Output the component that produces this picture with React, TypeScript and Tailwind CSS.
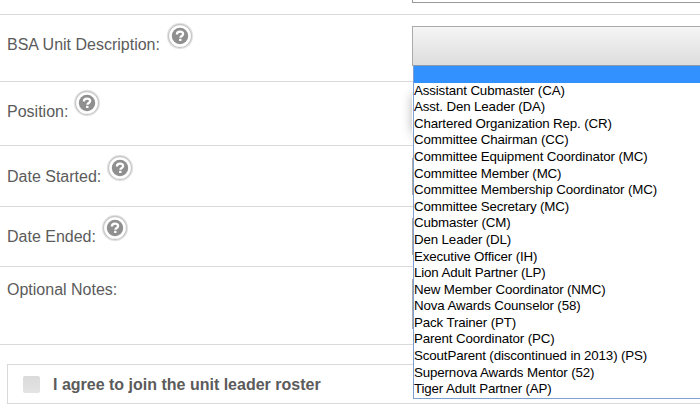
import React from 'react';

const ROWS = [
  { label: 'BSA Unit Description:', help: true, height: 'h-[67px]', pad: 'pt-[18px]', width: 'w-[159px]' },
  { label: 'Position:', help: true, height: 'h-[64px]', pad: 'pt-[18px]', width: 'w-[66px]' },
  { label: 'Date Started:', help: true, height: 'h-[61px]', pad: 'pt-[19px]', width: 'w-[99px]' },
  { label: 'Date Ended:', help: true, height: 'h-[60px]', pad: 'pt-[18px]', width: 'w-[94px]' },
  { label: 'Optional Notes:', help: false, height: 'h-[78px]', pad: 'pt-[11px]', width: 'w-auto' },
];

const POSITIONS = [
  'Assistant Cubmaster (CA)',
  'Asst. Den Leader (DA)',
  'Chartered Organization Rep. (CR)',
  'Committee Chairman (CC)',
  'Committee Equipment Coordinator (MC)',
  'Committee Member (MC)',
  'Committee Membership Coordinator (MC)',
  'Committee Secretary (MC)',
  'Cubmaster (CM)',
  'Den Leader (DL)',
  'Executive Officer (IH)',
  'Lion Adult Partner (LP)',
  'New Member Coordinator (NMC)',
  'Nova Awards Counselor (58)',
  'Pack Trainer (PT)',
  'Parent Coordinator (PC)',
  'ScoutParent (discontinued in 2013) (PS)',
  'Supernova Awards Mentor (52)',
  'Tiger Adult Partner (AP)',
];

function HelpIcon() {
  return (
    <svg className="-mt-[11px] h-7 w-7 shrink-0" viewBox="0 0 28 28" fill="none">
      <circle cx="14" cy="14" r="12.3" stroke="#e6e6e6" strokeWidth="1.8" />
      <circle cx="14" cy="14" r="11.5" fill="#fff" stroke="#c8c8c8" strokeWidth="1.3" />
      <circle cx="14" cy="14" r="8.2" fill="#8f8f8f" />
      <path d="M10.9 12.4c0-1.8 1.3-2.7 3.1-2.7s3.1.9 3.1 2.4c0 1.9-2.7 1.8-2.7 3.7" stroke="#fff" strokeWidth="2.3" />
      <path d="M13.1 16.8h2.4v2.2h-2.4z" fill="#fff" />
    </svg>
  );
}

export default function App() {
  return (
    <div className="relative h-[412px] w-[700px] overflow-hidden bg-white font-['Liberation_Sans',Arial,sans-serif] text-[#5b5b5b]">
      <div className="flex h-[15px] border-b border-[#d9d9d9]">
        <div className="ml-[412px] h-[3px] flex-1 border-b border-l border-[#999]" />
      </div>

      {ROWS.map((row, i) => (
        <div key={row.label} className={`flex border-b border-[#d9d9d9] ${row.height}`}>
          <div className={`flex w-[412px] shrink-0 items-start pl-[7px] ${row.pad}`}>
            <span className={`text-base leading-6 whitespace-nowrap ${row.width}`}>{row.label}</span>
            {row.help && <HelpIcon />}
          </div>
          {i === 0 && (
            <div className="mt-[11px] h-[40px] flex-1 border-t border-b border-l border-[#aaa] bg-linear-to-b from-[#f5f5f5] to-[#dddddd]" />
          )}
          {i === 1 && <div className="mt-[13px] h-[38px] flex-1 bg-white shadow-[0_0_10px_rgba(0,0,0,0.3)]" />}
          {i === 2 && <div className="mt-[12px] h-[37px] flex-1 border-l border-[#aaa]" />}
          {i === 3 && <div className="mt-[11px] h-[37px] flex-1 border-l border-[#aaa]" />}
          {i === 4 && <div className="mt-[12px] h-[50px] flex-1 border-l border-[#aaa]" />}
        </div>
      ))}

      <div className="mt-[19px] ml-[7px] flex h-[40px] items-center border border-r-0 border-[#d9d9d9] pl-[15px]">
        <span className="h-[17px] w-[17px] rounded-[2px] bg-linear-to-b from-[#dadada] to-[#e4e4e4]" />
        <span className="ml-[13px] pt-[2px] text-base font-bold">I agree to join the unit leader roster</span>
      </div>

      {/* open option list, lies over the form */}
      <ul className="absolute top-[65px] left-[413px] h-[334px] w-[300px] border border-[#7f9fd3] border-t-[#8d9aab] bg-white text-[13.33px] leading-[16.6px] tracking-[-0.14px] text-black">
        <li className="-mb-[0.45px] h-[17px] bg-[#3390ff]" />
        {POSITIONS.map((name) => (
          <li key={name} className="whitespace-nowrap">{name}</li>
        ))}
      </ul>
    </div>
  );
}
